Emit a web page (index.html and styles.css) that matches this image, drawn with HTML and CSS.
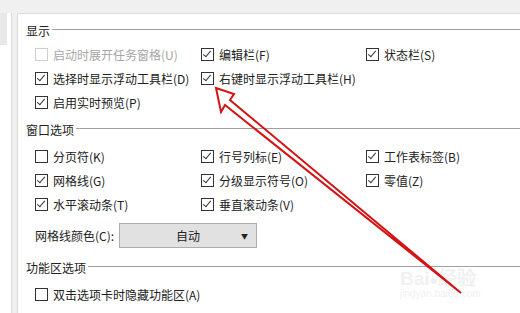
FILE: index.html
```html
<!DOCTYPE html>
<html lang="zh-CN">
<head>
    <meta charset="UTF-8">
    <title>选项 - 视图</title>
    <link rel="stylesheet" href="styles.css">
</head>
<body>
    <div class="topbar"></div>
    <div class="main">
        <div class="sidebar"><div class="side-item"></div></div>
        <div class="panel">

            <div class="group-title"><span>显示</span><i></i></div>
            <div class="opts">
                <label class="opt disabled"><span class="box"></span>启动时展开任务窗格(U)</label>
                <label class="opt"><span class="box on"></span>编辑栏(F)</label>
                <label class="opt"><span class="box on"></span>状态栏(S)</label>
                <label class="opt"><span class="box on"></span>选择时显示浮动工具栏(D)</label>
                <label class="opt"><span class="box on"></span>右键时显示浮动工具栏(H)</label>
                <span></span>
                <label class="opt"><span class="box on"></span>启用实时预览(P)</label>
            </div>

            <div class="group-title second"><span>窗口选项</span><i></i></div>
            <div class="opts">
                <label class="opt"><span class="box"></span>分页符(K)</label>
                <label class="opt"><span class="box on"></span>行号列标(E)</label>
                <label class="opt"><span class="box on"></span>工作表标签(B)</label>
                <label class="opt"><span class="box on"></span>网格线(G)</label>
                <label class="opt"><span class="box on"></span>分级显示符号(O)</label>
                <label class="opt"><span class="box on"></span>零值(Z)</label>
                <label class="opt"><span class="box on"></span>水平滚动条(T)</label>
                <label class="opt"><span class="box on"></span>垂直滚动条(V)</label>
            </div>
            <div class="color-row">
                <span>网格线颜色(C):</span>
                <div class="select">自动<span class="caret">▼</span></div>
            </div>

            <div class="group-title third"><span>功能区选项</span><i></i></div>
            <div class="opts">
                <label class="opt"><span class="box"></span>双击选项卡时隐藏功能区(A)</label>
            </div>
        </div>
    </div>

    <div class="watermark">
        <div class="wm-big">Bai<span class="paw">●</span>经验</div>
        <div class="wm-small">jingyan.baidu.com</div>
    </div>

    <svg class="arrow" width="520" height="313" viewBox="0 0 520 313">
        <polygon points="216,88 234,94 230,100 461,293 225,105 221,112"
                 fill="none" stroke="#d41414" stroke-width="2" stroke-linejoin="miter"/>
    </svg>
</body>
</html>
```

FILE: styles.css
```css
body {
    margin: 0;
    width: 520px;
    height: 313px;
    overflow: hidden;
    background: #f0f0f0;
    font-family: "Noto Sans CJK SC", "Noto Sans", sans-serif;
    font-size: 12px;
    color: #222;
    position: relative;
}
.topbar {
    height: 13px;
    background: #f0f0f0;
}
.main {
    display: flex;
    height: 300px;
}
.sidebar {
    width: 11px;
    border-right: 1px solid #d9d9d9;
    background: #fff;
}
.side-item {
    width: 7px;
    height: 32px;
    background: #e8e8e8;
}
.panel {
    flex: 1;
    margin-left: 5px;
    background: #fff;
    border-left: 1px solid #dcdcdc;
    border-top: 1px solid #dcdcdc;
    padding-top: 8px;
}
.group-title {
    display: flex;
    align-items: center;
    height: 18px;
    padding-left: 8px;
}
.group-title span {
    line-height: 18px;
}
.group-title i {
    flex: 1;
    height: 1px;
    background: #a0a0a0;
    margin-left: 2px;
    margin-top: -3px;
}
.group-title.second {
    margin-top: 7px;
}
.group-title.third {
    margin-top: 11px;
}
.opts {
    display: grid;
    grid-template-columns: 166px 165px auto;
    grid-auto-rows: 24px;
    padding-left: 17px;
    margin-top: 2px;
}
.second + .opts,
.third + .opts {
    margin-top: 5px;
}
.opt {
    display: flex;
    align-items: center;
    white-space: nowrap;
}
.box {
    width: 11px;
    height: 11px;
    border: 1px solid #333;
    margin-right: 5px;
    position: relative;
    flex: none;
}
.box.on::after {
    content: "";
    position: absolute;
    left: 3px;
    top: 0;
    width: 3px;
    height: 7px;
    border-right: 1.3px solid #333;
    border-bottom: 1.3px solid #333;
    transform: rotate(40deg);
}
.opt.disabled {
    color: #a6a6a6;
}
.opt.disabled .box {
    border-color: #cfcfcf;
}
.color-row {
    display: flex;
    align-items: center;
    padding-left: 17px;
    margin-top: 7px;
    height: 25px;
}
.color-row > span {
    width: 84px;
}
.select {
    width: 136px;
    height: 23px;
    border: 1px solid #adadad;
    background: #e1e1e1;
    display: flex;
    align-items: center;
    justify-content: center;
    position: relative;
}
.caret {
    position: absolute;
    right: 8px;
    font-size: 7px;
    color: #222;
}
.watermark {
    position: absolute;
    left: 400px;
    top: 263px;
    color: #f1f1f1;
    font-family: "Liberation Sans", sans-serif;
}
.wm-big {
    font-size: 19px;
    font-weight: bold;
}
.paw {
    font-size: 14px;
}
.wm-small {
    font-size: 10px;
    margin-top: -2px;
}
.arrow {
    position: absolute;
    left: 0;
    top: 0;
    pointer-events: none;
}
```
